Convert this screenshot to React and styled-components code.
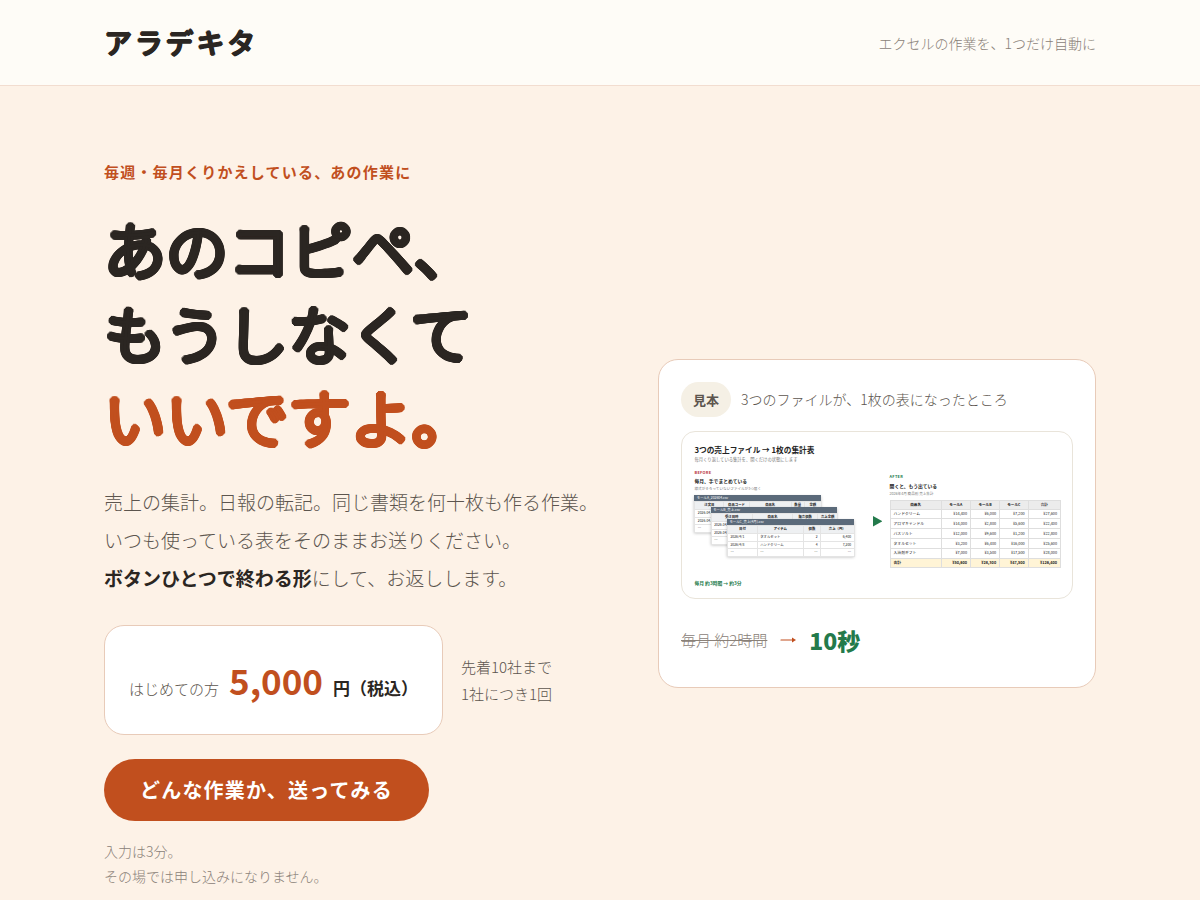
import React from 'react';
import styled, { createGlobalStyle, css } from 'styled-components';

const GlobalStyle = createGlobalStyle`
  * {
    box-sizing: border-box;
  }

  body {
    margin: 0;
    background: #fdf2e7;
    color: #2b2622;
    font-family: 'Noto Sans CJK JP', 'Noto Sans', sans-serif;
    font-weight: 300;
  }

  h1, h2, h3, p {
    margin: 0;
  }
`;

// Thin letters grown evenly in every direction get round stroke ends
const roundLarge = css`
  text-shadow:
    3px 0 currentColor, -3px 0 currentColor, 0 3px currentColor, 0 -3px currentColor,
    3px 1px currentColor, 3px -1px currentColor, -3px 1px currentColor, -3px -1px currentColor,
    1px 3px currentColor, 1px -3px currentColor, -1px 3px currentColor, -1px -3px currentColor,
    2px 2px currentColor, 2px -2px currentColor, -2px 2px currentColor, -2px -2px currentColor,
    1px 0 currentColor, -1px 0 currentColor, 0 1px currentColor, 0 -1px currentColor;
`;

const roundSmall = css`
  text-shadow:
    1px 0 currentColor, -1px 0 currentColor, 0 1px currentColor, 0 -1px currentColor;
`;

// Top bar with the brand name
const Header = styled.header`
  background: #fefcf7;
  border-bottom: 1px solid #f2ddd0;
`;

const HeaderInner = styled.div`
  display: flex;
  align-items: center;
  justify-content: space-between;
  max-width: 1040px;
  margin: 0 auto;
  padding: 20px 24px;
`;

const Logo = styled.a`
  color: #2b2622;
  font-size: 28px;
  font-weight: 500;
  line-height: 45px;
  letter-spacing: 0.1em;
  text-decoration: none;
  ${roundSmall}
`;

const Tagline = styled.p`
  color: #8a8178;
  font-size: 14px;
`;

// Two column hero
const Hero = styled.main`
  display: grid;
  grid-template-columns: minmax(0, 498fr) minmax(0, 438fr);
  gap: 56px;
  align-items: center;
  max-width: 1040px;
  margin: 0 auto;
  padding: 72px 24px 10px;

  @media (max-width: 900px) {
    grid-template-columns: 1fr;
  }
`;

const Kicker = styled.p`
  color: #c14f1e;
  font-size: 15px;
  font-weight: 700;
  line-height: 28px;
  letter-spacing: 0.08em;
  margin-bottom: 20px;
`;

const Title = styled.h1`
  font-size: 62px;
  font-weight: 300;
  line-height: 84px;
  ${roundLarge}

  em {
    color: #c14f1e;
    font-style: normal;
    ${roundLarge}
  }
`;

const Lead = styled.p`
  color: #5c554e;
  font-size: 19px;
  line-height: 38px;
  margin-top: 25px;

  strong {
    color: #2b2622;
    font-weight: 700;
  }
`;

const PriceRow = styled.div`
  display: flex;
  flex-wrap: wrap;
  align-items: center;
  gap: 18px;
  margin-top: 28px;
`;

const PriceCard = styled.div`
  display: flex;
  align-items: baseline;
  gap: 10px;
  padding: 24px;
  background: #fff;
  border: 1px solid #e8cbb9;
  border-radius: 20px;
`;

const PriceLabel = styled.span`
  color: #5c554e;
  font-size: 15px;
`;

const PriceValue = styled.span`
  color: #c14f1e;
  font-size: 35px;
  font-weight: 700;
  line-height: 60px;
`;

const PriceUnit = styled.span`
  font-size: 17px;
  font-weight: 700;
`;

const PriceNote = styled.p`
  color: #5c554e;
  font-size: 15px;
  line-height: 27px;
`;

const CTAButton = styled.button`
  display: block;
  margin-top: 24px;
  padding: 0 36px;
  border: 0;
  border-radius: 31px;
  background: #c14f1e;
  color: #fff;
  font-family: inherit;
  font-size: 20px;
  font-weight: 700;
  line-height: 62px;
  letter-spacing: 0.06em;
  cursor: pointer;
`;

const SmallNote = styled.p`
  color: #8a8178;
  font-size: 14px;
  line-height: 25px;
  margin-top: 18px;
`;

// Sample card on the right
const SampleCard = styled.section`
  padding: 22px;
  background: #fff;
  border: 1px solid #e8cbb9;
  border-radius: 20px;
`;

const SampleHead = styled.div`
  display: flex;
  align-items: center;
  gap: 10px;
  margin-bottom: 14px;
  color: #5c554e;
  font-size: 14px;
  line-height: 35px;
`;

const Badge = styled.span`
  padding: 0 12px;
  border-radius: 18px;
  background: #f5f0e5;
  font-size: 13px;
  font-weight: 700;
`;

const ResultRow = styled.div`
  display: flex;
  align-items: center;
  gap: 12px;
  margin-top: 16px;
  line-height: 50px;
`;

const OldTime = styled.s`
  color: #8a8178;
  font-size: 15px;
`;

const NewTime = styled.strong`
  color: #237a4b;
  font-size: 23px;
  font-weight: 900;
`;

// Miniature of the before / after sheets, drawn large and zoomed down
const Preview = styled.div`
  overflow: hidden;
  border: 1px solid #e9e4da;
  border-radius: 14px;
`;

const Mini = styled.div`
  zoom: 0.24;
  padding: 50px 50px 50px 52px;
  color: #222;
  font-weight: 400;
`;

const MiniTitle = styled.h2`
  font-size: 32px;
  font-weight: 700;
  line-height: 48px;
`;

const MiniText = styled.p`
  color: #777;
  font-size: ${props => props.$size || '15px'};
  line-height: 30px;
`;

const MiniBody = styled.div`
  display: flex;
  align-items: center;
  height: 430px;
  margin-top: 28px;
`;

const MiniLabel = styled.p`
  color: ${props => props.color};
  font-size: 16px;
  font-weight: 700;
  line-height: 28px;
  letter-spacing: 0.08em;
`;

const MiniHeading = styled.h3`
  font-size: 20px;
  font-weight: 700;
  line-height: 38px;
`;

const Before = styled.div`
  flex: none;
  align-self: flex-start;
  width: 663px;
`;

const After = styled.div`
  flex: none;
  width: 710px;
  margin-left: 30px;
`;

const MiniArrow = styled.svg`
  flex: none;
  width: 40px;
  height: 44px;
  margin-left: auto;
`;

const MiniFooter = styled.p`
  color: #237a4b;
  font-size: 20px;
  font-weight: 700;
  line-height: 30px;
  margin-top: 24px;
`;

// The three sheets share one grid cell and overlap
const SheetStack = styled.div`
  display: grid;
  align-items: start;
  justify-items: start;
  margin-top: 8px;
`;

const Sheet = styled.div`
  grid-area: 1 / 1;
  width: 527px;
  margin: ${props => props.$level * 50}px 0 0 ${props => props.$level * 68}px;
  background: #fff;
  box-shadow: 0 3px 12px rgba(0, 0, 0, 0.25);
`;

const SheetBar = styled.div`
  padding-left: 10px;
  background: #5b6a7a;
  color: #fff;
  font-size: 14px;
  line-height: 28px;
`;

const SheetTable = styled.table`
  width: 100%;
  border-collapse: collapse;
  table-layout: fixed;
  font-size: 14px;

  th, td {
    height: 32px;
    padding: 0 10px;
    border: 1px solid #e4e4e4;
    line-height: 20px;
    white-space: nowrap;
  }

  th {
    padding: 0;
    background: #eef0f2;
    font-weight: 700;
  }

  td:nth-child(n + 3) {
    text-align: right;
  }
`;

const SummaryTable = styled.table`
  width: 100%;
  margin-top: 12px;
  border-collapse: collapse;
  table-layout: fixed;
  font-size: 16px;

  th, td {
    height: 41px;
    padding: 0 12px;
    border: 1px solid #dedede;
    line-height: 24px;
    text-align: right;
  }

  th:first-child, td:first-child {
    text-align: left;
  }

  thead th, thead th:first-child {
    height: 36px;
    background: #ececec;
    font-size: 15px;
    text-align: center;
  }

  tfoot th, tfoot td {
    background: #fff4d6;
    font-weight: 700;
  }
`;

const sheets = [
  {
    name: 'モールA_202604.csv',
    widths: [120, 106, 175, 54, 72],
    head: ['注文日', '商品コード', '商品名', '数量', '金額'],
    rows: [
      ['2026-04-01', 'A-1001', 'タオルセット', '2', '6,400'],
      ['2026-04-02', 'A-1002', 'バスソルト', '1', '1,200'],
    ],
  },
  {
    name: 'モールB_売上.csv',
    widths: [170, 170, 103, 84],
    head: ['受注日時', '商品名', '販売個数', '売上金額'],
    rows: [
      ['2026-04-01', 'ハンドクリーム', '3', '5,400'],
      ['2026-04-02', 'アロマキャンドル', '1', '2,800'],
    ],
  },
  {
    name: 'モールC_売上(4月).csv',
    widths: [124, 192, 71, 140],
    head: ['日付', 'アイテム', '個数', '売上（円）'],
    rows: [
      ['2026/4/1', 'タオルセット', '2', '6,400'],
      ['2026/4/8', 'ハンドクリーム', '4', '7,200'],
    ],
  },
];

const summaryWidths = [213, 122, 121, 119, 135];
const summaryHead = ['商品名', 'モールA', 'モールB', 'モールC', '合計'];
const summaryRows = [
  ['ハンドクリーム', '¥14,400', '¥6,000', '¥7,200', '¥27,600'],
  ['アロマキャンドル', '¥14,000', '¥2,800', '¥5,600', '¥22,400'],
  ['バスソルト', '¥12,000', '¥9,600', '¥1,200', '¥22,800'],
  ['タオルセット', '¥3,200', '¥6,400', '¥16,000', '¥25,600'],
  ['入浴剤ギフト', '¥7,000', '¥3,500', '¥17,500', '¥28,000'],
];
const summaryTotal = ['¥50,600', '¥28,300', '¥47,500', '¥126,400'];

function Columns({ widths }) {
  return (
    <colgroup>
      {widths.map((width, index) => (
        <col key={index} width={width} />
      ))}
    </colgroup>
  );
}

function SalesSheet({ sheet, level }) {
  return (
    <Sheet $level={level}>
      <SheetBar>{sheet.name}</SheetBar>
      <SheetTable>
        <Columns widths={sheet.widths} />
        <thead>
          <tr>{sheet.head.map(label => <th key={label}>{label}</th>)}</tr>
        </thead>
        <tbody>
          {sheet.rows.map(row => (
            <tr key={row[0]}>
              {row.map((cell, index) => <td key={index}>{cell}</td>)}
            </tr>
          ))}
          <tr>{sheet.head.map(label => <td key={label}>…</td>)}</tr>
        </tbody>
      </SheetTable>
    </Sheet>
  );
}

function BeforeAfter() {
  return (
    <Preview>
      <Mini>
        <MiniTitle>3つの売上ファイル → 1枚の集計表</MiniTitle>
        <MiniText $size="18px">毎月くり返している集計を、開くだけの状態にします</MiniText>
        <MiniBody>
          <Before>
            <MiniLabel color="#b8323a">BEFORE</MiniLabel>
            <MiniHeading>毎月、手でまとめている</MiniHeading>
            <MiniText>様式がそろっていないファイルが3つ届く</MiniText>
            <SheetStack>
              {sheets.map((sheet, index) => (
                <SalesSheet key={sheet.name} sheet={sheet} level={index} />
              ))}
            </SheetStack>
          </Before>
          <MiniArrow viewBox="0 0 40 44" aria-hidden="true">
            <path d="M0 0 L40 22 L0 44 Z" fill="#237a4b" />
          </MiniArrow>
          <After>
            <MiniLabel color="#237a4b">AFTER</MiniLabel>
            <MiniHeading>開くと、もう出ている</MiniHeading>
            <MiniText>2026年4月 商品別 売上集計</MiniText>
            <SummaryTable>
              <Columns widths={summaryWidths} />
              <thead>
                <tr>{summaryHead.map(label => <th key={label}>{label}</th>)}</tr>
              </thead>
              <tbody>
                {summaryRows.map(row => (
                  <tr key={row[0]}>
                    {row.map((cell, index) => <td key={index}>{cell}</td>)}
                  </tr>
                ))}
              </tbody>
              <tfoot>
                <tr>
                  <th>合計</th>
                  {summaryTotal.map(cell => <td key={cell}>{cell}</td>)}
                </tr>
              </tfoot>
            </SummaryTable>
          </After>
        </MiniBody>
        <MiniFooter>毎月 約3時間 → 約3分</MiniFooter>
      </Mini>
    </Preview>
  );
}

function App() {
  return (
    <>
      <GlobalStyle />
      <Header>
        <HeaderInner>
          <Logo href="#top">アラデキタ</Logo>
          <Tagline>エクセルの作業を、1つだけ自動に</Tagline>
        </HeaderInner>
      </Header>

      <Hero id="top">
        <div>
          <Kicker>毎週・毎月くりかえしている、あの作業に</Kicker>
          <Title>
            あのコピペ、<br />
            もうしなくて<br />
            <em>いいですよ。</em>
          </Title>
          <Lead>
            売上の集計。日報の転記。同じ書類を何十枚も作る作業。<br />
            いつも使っている表をそのままお送りください。<br />
            <strong>ボタンひとつで終わる形</strong>にして、お返しします。
          </Lead>
          <PriceRow>
            <PriceCard>
              <PriceLabel>はじめての方</PriceLabel>
              <PriceValue>5,000</PriceValue>
              <PriceUnit>円（税込）</PriceUnit>
            </PriceCard>
            <PriceNote>
              先着10社まで<br />
              1社につき1回
            </PriceNote>
          </PriceRow>
          <CTAButton type="button">どんな作業か、送ってみる</CTAButton>
          <SmallNote>
            入力は3分。<br />
            その場では申し込みになりません。
          </SmallNote>
        </div>

        <SampleCard>
          <SampleHead>
            <Badge>見本</Badge>
            <span>3つのファイルが、1枚の表になったところ</span>
          </SampleHead>
          <BeforeAfter />
          <ResultRow>
            <OldTime>毎月 約2時間</OldTime>
            <svg width="18" height="12" viewBox="0 0 18 12" aria-hidden="true">
              <path d="M2 6 H14" stroke="#c14f1e" strokeWidth="1.2" strokeLinecap="round" />
              <path d="M13 3.5 L17 6 L13 8.5 Z" fill="#c14f1e" />
            </svg>
            <NewTime>10秒</NewTime>
          </ResultRow>
        </SampleCard>
      </Hero>
    </>
  );
}

export default App;
